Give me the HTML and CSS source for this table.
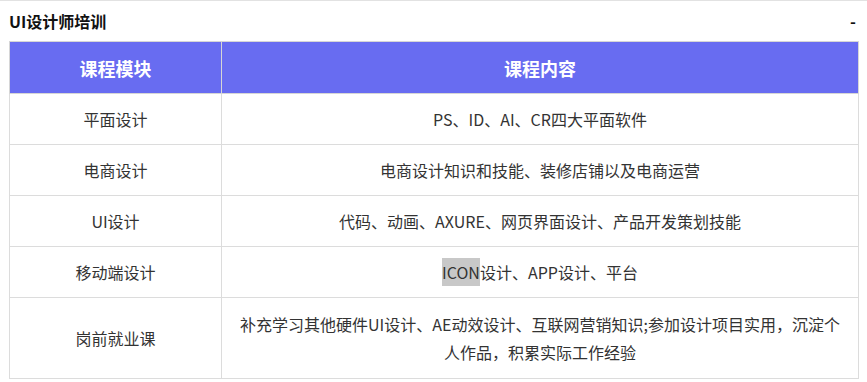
FILE: index.html
```html
<!DOCTYPE html>
<html lang="zh-CN">
<head>
<meta charset="utf-8">
<title>UI设计师培训</title>
<link rel="stylesheet" href="styles.css">
</head>
<body>
<div class="panel">
  <div class="panel-head">
    <span class="panel-title">UI设计师培训</span>
    <span class="panel-toggle">-</span>
  </div>
  <table class="course">
    <thead>
      <tr><th class="col-a">课程模块</th><th>课程内容</th></tr>
    </thead>
    <tbody>
      <tr><td>平面设计</td><td>PS、ID、AI、CR四大平面软件</td></tr>
      <tr><td>电商设计</td><td>电商设计知识和技能、装修店铺以及电商运营</td></tr>
      <tr><td>UI设计</td><td>代码、动画、AXURE、网页界面设计、产品开发策划技能</td></tr>
      <tr><td>移动端设计</td><td><span class="hl">ICON</span>设计、APP设计、平台</td></tr>
      <tr class="tall"><td>岗前就业课</td><td>补充学习其他硬件UI设计、AE动效设计、互联网营销知识;参加设计项目实用，沉淀个人作品，积累实际工作经验</td></tr>
    </tbody>
  </table>
</div>
</body>
</html>
```
FILE: styles.css
```css
html, body {
  margin: 0;
  padding: 0;
  background: #fff;
}
body {
  font-family: "Microsoft YaHei", "Noto Sans CJK SC", sans-serif;
  color: #333;
}
.panel {
  border-top: 1px solid #e2e2e2;
  padding: 0 9px;
}
.panel-head {
  height: 40px;
  display: flex;
  align-items: center;
  justify-content: space-between;
}
.panel-title {
  font-size: 16px;
  font-weight: bold;
  color: #111;
}
.panel-toggle {
  font-size: 16px;
  font-weight: bold;
  color: #111;
  margin-right: 2px;
}
.course {
  width: 850px;
  border-collapse: collapse;
  border: 1px solid #dcdcdc;
  font-size: 16px;
}
.course th, .course td {
  border: 1px solid #dcdcdc;
  text-align: center;
  line-height: 28px;
}
.course th {
  background: #686cf1;
  color: #fff;
  font-size: 18px;
  font-weight: bold;
  height: 51px;
  padding: 0;
  border-color: #d6d6d6;
}
.course .col-a {
  width: 211px;
}
.course td {
  padding: 11px 10px;
  color: #333;
}
.course .tall td {
  padding: 12px 16px;
}
.hl {
  display: inline-block;
  background: #c8c8c8;
  line-height: 28px;
}
```
